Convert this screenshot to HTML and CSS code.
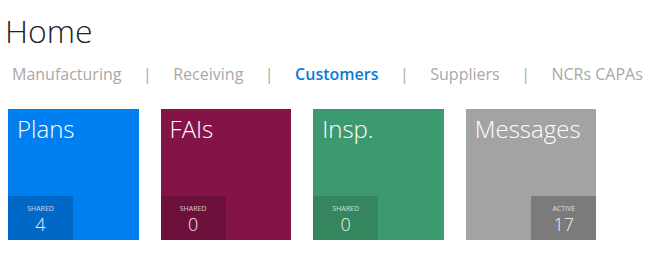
FILE: index.html
```html
<!DOCTYPE html>
<html>
<head>
<meta charset="utf-8">
<link rel="stylesheet" href="styles.css">
</head>
<body>
<div class="page">
  <h1 class="title">Home</h1>
  <nav class="tabs">
    <a class="tab">Manufacturing</a>
    <span class="sep">|</span>
    <a class="tab">Receiving</a>
    <span class="sep">|</span>
    <a class="tab active">Customers</a>
    <span class="sep">|</span>
    <a class="tab">Suppliers</a>
    <span class="sep">|</span>
    <a class="tab">NCRs CAPAs</a>
  </nav>
  <div class="tiles">
    <div class="tile tile-blue">
      <div class="tile-name">Plans</div>
      <div class="badge">
        <div class="badge-label">SHARED</div>
        <div class="badge-count">4</div>
      </div>
    </div>
    <div class="tile tile-plum">
      <div class="tile-name">FAIs</div>
      <div class="badge">
        <div class="badge-label">SHARED</div>
        <div class="badge-count">0</div>
      </div>
    </div>
    <div class="tile tile-green">
      <div class="tile-name">Insp.</div>
      <div class="badge">
        <div class="badge-label">SHARED</div>
        <div class="badge-count">0</div>
      </div>
    </div>
    <div class="tile tile-gray">
      <div class="tile-name">Messages</div>
      <div class="badge badge-right">
        <div class="badge-label">ACTIVE</div>
        <div class="badge-count">17</div>
      </div>
    </div>
  </div>
</div>
</body>
</html>
```
FILE: styles.css
```css
html, body {
  margin: 0;
  padding: 0;
  background: #ffffff;
  font-family: "Open Sans", "Noto Sans", sans-serif;
}

.page {
  padding: 0 0 0 8px;
}

.title {
  margin: 0 0 0 -3px;
  padding-top: 11px;
  font-size: 32px;
  line-height: 40px;
  font-weight: 300;
  color: #222222;
}

.tabs {
  display: flex;
  align-items: baseline;
  margin-top: 11px;
  padding-left: 4px;
  font-size: 16px;
  line-height: 24px;
  color: #a8a8a8;
  white-space: nowrap;
}

.tab {
  color: #a8a8a8;
}

.tab.active {
  color: #0a7ad9;
  font-weight: 600;
}

.sep {
  margin: 0 21.5px;
}

.tiles {
  display: flex;
  gap: 22px;
  margin-top: 23px;
}

.tile {
  width: 130.6px;
  height: 131px;
  display: flex;
  flex-direction: column;
  justify-content: space-between;
  align-items: flex-start;
  color: #ffffff;
}

.tile-name {
  padding: 4px 0 0 9px;
  font-size: 24px;
  line-height: 32px;
  font-weight: 300;
}

.badge {
  width: 65px;
  height: 44px;
  display: flex;
  flex-direction: column;
  align-items: center;
  padding-top: 8px;
  box-sizing: border-box;
}

.badge-right {
  align-self: flex-end;
}

.badge-label {
  font-size: 7px;
  line-height: 9px;
  opacity: 0.75;
}

.badge-count {
  font-size: 18px;
  line-height: 22px;
  font-weight: 300;
  opacity: 0.9;
}

.tile-blue { background: #0080f0; }
.tile-blue .badge { background: #0069c8; }
.tile-plum { background: #841447; }
.tile-plum .badge { background: #6d103c; }
.tile-green { background: #3d9970; }
.tile-green .badge { background: #35865f; }
.tile-gray { background: #a3a3a3; }
.tile-gray .badge { background: #7b7b7b; }
```
